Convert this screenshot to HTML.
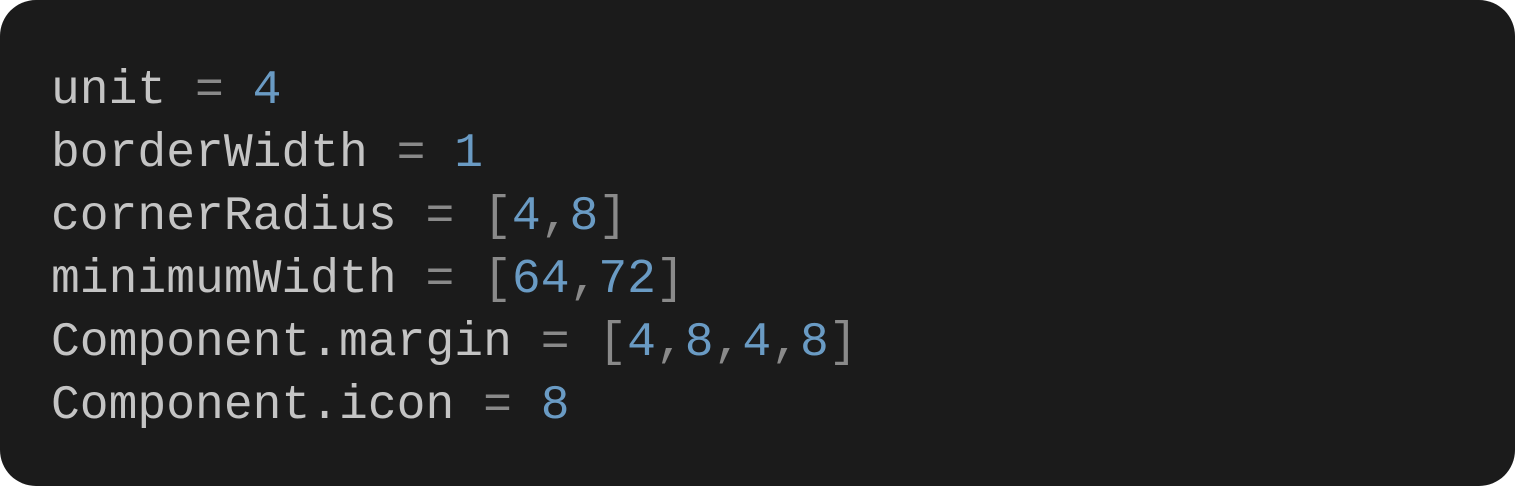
<!DOCTYPE html><html><head><style>
html,body{margin:0;padding:0;background:#fff;width:1515px;height:486px;overflow:hidden}
.box{position:absolute;left:0;top:0;width:1515px;height:486px;background:#1b1b1b;border-radius:36px}
pre{position:absolute;left:51px;top:60px;margin:0;font-family:"Liberation Mono",monospace;font-size:48px;line-height:63px;color:#c4c4c4}
.o{color:#8a8a8a}.n{color:#6a9bc4}
</style></head><body><div class="box"><pre>unit <span class="o">=</span> <span class="n">4</span>
borderWidth <span class="o">=</span> <span class="n">1</span>
cornerRadius <span class="o">= [</span><span class="n">4</span><span class="o">,</span><span class="n">8</span><span class="o">]</span>
minimumWidth <span class="o">= [</span><span class="n">64</span><span class="o">,</span><span class="n">72</span><span class="o">]</span>
Component.margin <span class="o">= [</span><span class="n">4</span><span class="o">,</span><span class="n">8</span><span class="o">,</span><span class="n">4</span><span class="o">,</span><span class="n">8</span><span class="o">]</span>
Component.icon <span class="o">=</span> <span class="n">8</span></pre></div></body></html>
